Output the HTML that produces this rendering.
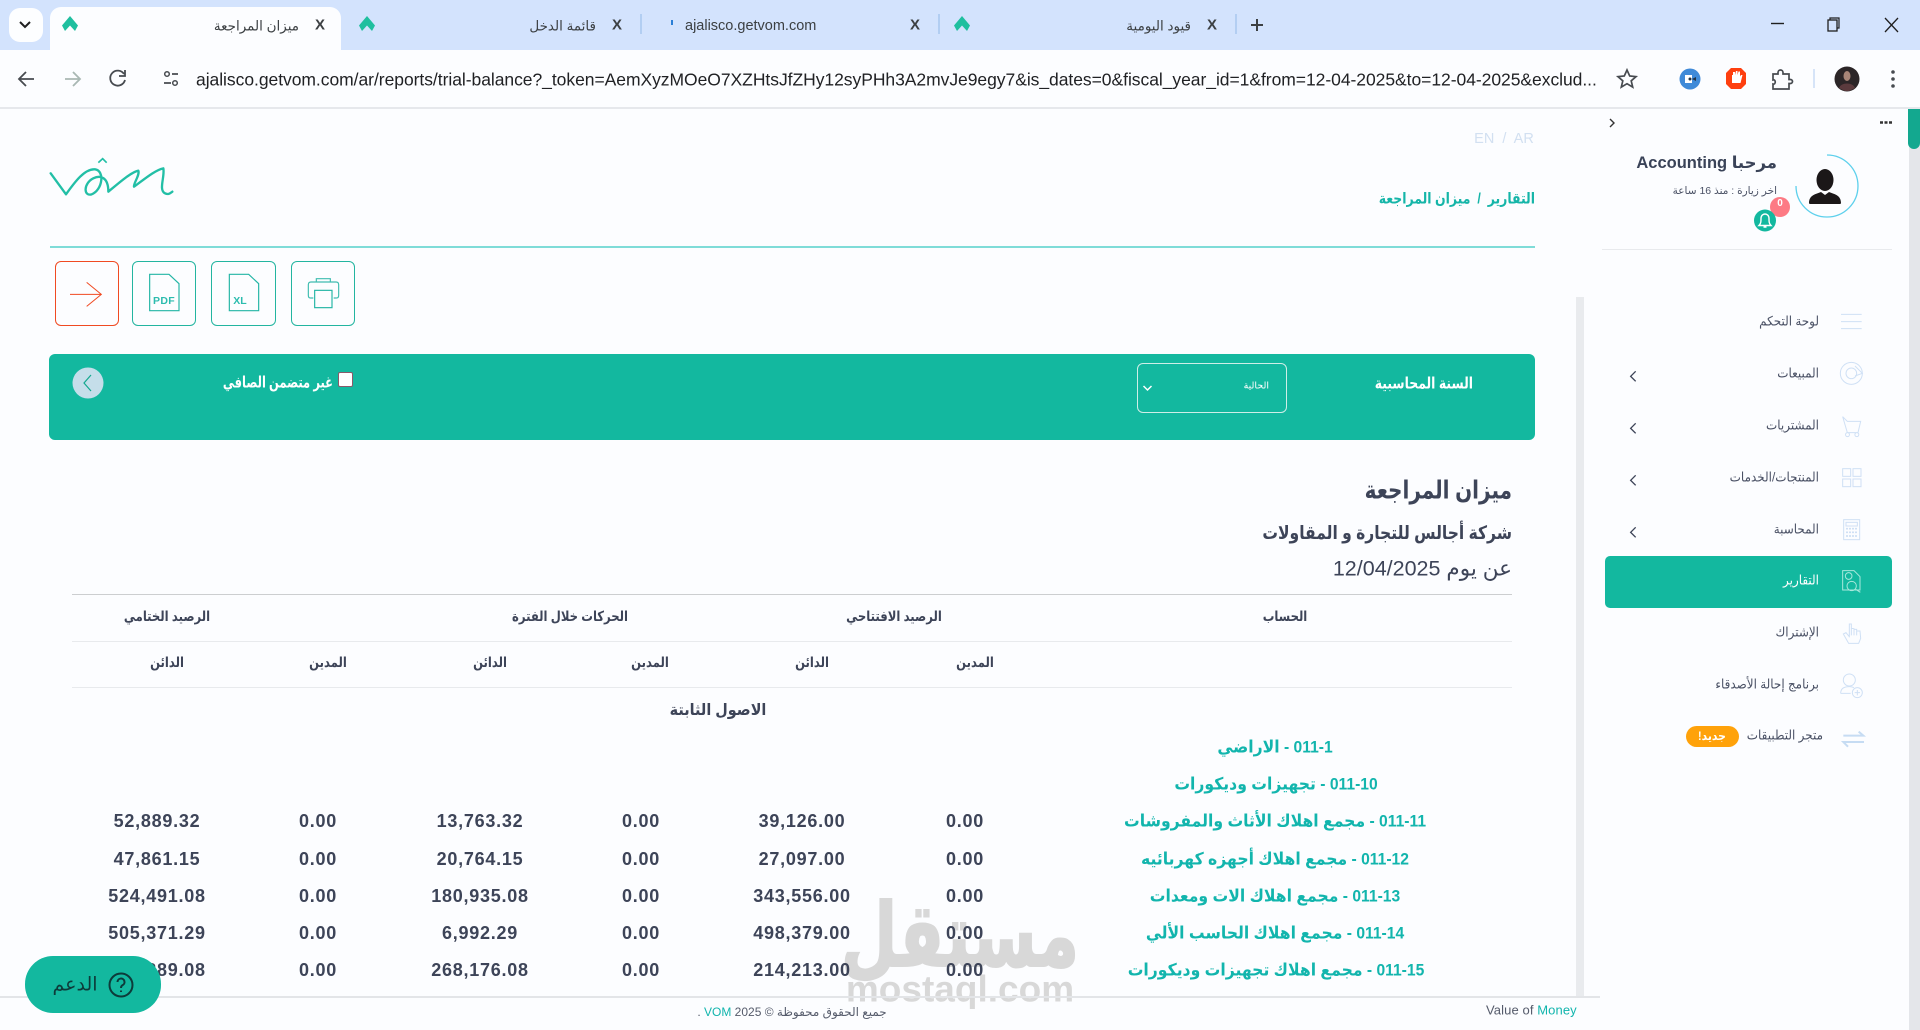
<!DOCTYPE html>
<html lang="ar"><head><meta charset="utf-8"><title>ميزان المراجعة</title>
<style>
html,body{margin:0;padding:0;width:1920px;height:1030px;overflow:hidden;background:#fcfdff}
body{position:relative;font-family:"Liberation Sans","DejaVu Sans",sans-serif;color:#3d4458}
.a{position:absolute}
.c,.r,.l{position:absolute;white-space:nowrap;line-height:1}
.c{transform:translate(-50%,-50%) scaleX(var(--s,1))}
.r{transform:translate(-100%,-50%) scaleX(var(--s,1));transform-origin:100% 50%}
.l{transform:translateY(-50%)}
.ar{direction:rtl}
.h{font-size:14px;font-weight:bold;color:#3d4458;--s:.83}
.n{font-size:18px;font-weight:bold;color:#3d4458;letter-spacing:.75px}
.acc{font-size:17px;font-weight:bold;color:#12b5ad;--s:.92}
.m{font-size:13px;color:#4a5165;--s:.92}
svg{position:absolute;overflow:visible}
.tt{font-size:13.5px;color:#3c4043}
.x{font-size:15px;color:#3c4043;font-weight:bold}
.tbtn{position:absolute;top:261px;height:63px;border:1.3px solid #23b5a0;border-radius:6px;box-sizing:content-box}
</style></head><body>

<div class="a" style="left:0;top:0;width:1920px;height:50px;background:#d3e3fd"></div>
<div class="a" style="left:9px;top:8px;width:34px;height:34px;background:#fdfeff;border-radius:11px"></div>
<svg style="left:0;top:0" width="60" height="50"><path d="M20 22l5 5 5-5" fill="none" stroke="#1f1f1f" stroke-width="2"/></svg>
<div class="a" style="left:50px;top:7px;width:291px;height:43px;background:#fcfdff;border-radius:11px 11px 0 0"></div>
<div class="a" style="left:0;top:50px;width:1920px;height:57px;background:#fcfdff"></div>
<div class="a" style="left:0;top:107px;width:1920px;height:2px;background:#e6e8ec"></div>

<svg style="left:0;top:0" width="1000" height="50">
<defs><path id="v" d="M0 -8L8 1.500 5 7 0 1.500 -5 7 -8 1.500Z" fill="#1fbf9f"/></defs>
<use href="#v" x="70" y="24"/><use href="#v" x="367" y="24"/><use href="#v" x="962" y="24"/>
<path d="M672 20v5" stroke="#2a7fd6" stroke-width="2"/>
<path d="M641 14v20M939 14v20" stroke="#a8c7ef" stroke-width="1.500"/>
</svg>
<svg style="left:0;top:0" width="1920" height="50">
<path d="M1236 14v20" stroke="#a8c7ef" stroke-width="1.500"/>
<path d="M1251 25h12M1257 19v12" stroke="#3c4043" stroke-width="2"/>
<path d="M1771 23.500h13" stroke="#1f1f1f" stroke-width="1.400"/>
<rect x="1828" y="20" width="9" height="11" fill="none" stroke="#1f1f1f" stroke-width="1.300"/><path d="M1830 20v-2h9v10h-2" fill="none" stroke="#1f1f1f" stroke-width="1.200"/>
<path d="M1885 18l13 14M1898 18l-13 14" stroke="#1f1f1f" stroke-width="1.300"/>
</svg>
<div class="r ar tt" style="left:299px;top:26px">ميزان المراجعة</div><div class="c x" style="left:320px;top:25px">X</div>
<div class="r ar tt" style="left:596px;top:26px">قائمة الدخل</div><div class="c x" style="left:617px;top:25px">X</div>
<div class="l tt" style="left:685px;top:26px;font-size:14.500px">ajalisco.getvom.com</div><div class="c x" style="left:915px;top:25px">X</div>
<div class="r ar tt" style="left:1191px;top:26px">قيود اليومية</div><div class="c x" style="left:1212px;top:25px">X</div>

<svg style="left:0;top:50px" width="1920" height="57">
<path d="M34 29H20M26 22l-7 7 7 7" fill="none" stroke="#474b50" stroke-width="1.800"/>
<path d="M65 29h14M73 22l7 7-7 7" fill="none" stroke="#a9b8b3" stroke-width="1.800"/>
<path d="M124 24a7.500 7.500 0 1 0 1 6M125 20v6h-6" fill="none" stroke="#474b50" stroke-width="1.800"/>
<circle cx="167" cy="24" r="2.300" fill="none" stroke="#474b50" stroke-width="1.500"/><path d="M172 24h6M164 33h7" stroke="#474b50" stroke-width="1.800"/><circle cx="175" cy="33" r="2.300" fill="none" stroke="#474b50" stroke-width="1.500"/>
<path d="M1627 20l2.700 6 6.300.6-4.800 4.200 1.500 6.300-5.700-3.400-5.700 3.400 1.500-6.300-4.800-4.200 6.300-.6z" fill="none" stroke="#474b50" stroke-width="1.700"/>
<circle cx="1690" cy="29" r="10.500" fill="#3f8ad8"/><rect x="1685" y="25" width="7" height="8" fill="#fff"/><circle cx="1690" cy="29" r="1.500" fill="#234"/><path d="M1692 29l4-2v4z" fill="#234"/>
<path d="M1731 18h10l5 5v11l-5 5h-10l-5-5V23z" fill="#fe3f0f"/><path d="M1732 33v-8l1 0 0-3 2 0v3l1-4 1.500 0 0 4 1-3.500 1.500 0 0 5 1-1.500 1.500 0-2 8h-6z" fill="#fff"/>
<path d="M1773 24h5v-1.500a2.500 2.500 0 0 1 5 0V24h6v5.500h1.500a2 2 0 0 1 0 4H1789V39h-16v-5c3 1 3-5 0-4z" fill="none" stroke="#474b50" stroke-width="1.700"/>
<path d="M1814 19v19" stroke="#c9dcf6" stroke-width="1.500"/>
<circle cx="1847" cy="29" r="12.500" fill="#2b2527"/><path d="M1839 38c2-6 14-6 16 0l-6 3h-4z" fill="#5a3a3d"/><ellipse cx="1847" cy="26" rx="3.500" ry="5" fill="#a88577"/>
<circle cx="1893" cy="22" r="1.800" fill="#474b50"/><circle cx="1893" cy="29" r="1.800" fill="#474b50"/><circle cx="1893" cy="36" r="1.800" fill="#474b50"/>
</svg>
<div class="l" id="url" style="left:196px;top:80px;font-size:17.500px;color:#202124;letter-spacing:-.045px">ajalisco.getvom.com/ar/reports/trial-balance?_token=AemXyzMOeO7XZHtsJfZHy12syPHh3A2mvJe9egy7&amp;is_dates=0&amp;fiscal_year_id=1&amp;from=12-04-2025&amp;to=12-04-2025&amp;exclud...</div>

<!-- logo -->
<svg style="left:30px;top:140px" width="340" height="200" viewBox="0 0 1020 600">
<path d="M62 100L108 163C135 125 165 85 195 88C225 92 218 150 185 163C160 170 160 130 190 115C210 105 235 110 235 155C265 130 305 95 325 92C330 105 310 130 312 140C340 120 375 90 400 85C405 110 385 150 405 160C415 165 420 160 427 155" fill="none" stroke="#22bfa6" stroke-width="7" stroke-linecap="round" stroke-linejoin="round"/>
<path d="M205 68L218 56 230 68" fill="none" stroke="#22bfa6" stroke-width="5"/>
</svg>
<div class="c" style="left:1504px;top:139px;font-size:14.500px;color:#d2e0f1;white-space:pre">EN  /  AR</div>
<div class="r ar" style="left:1535px;top:199px;font-size:15px;font-weight:bold;color:#15b5a8;white-space:pre;--s:.83">التقارير  /  <span>ميزان المراجعة</span></div>
<div class="a" style="left:50px;top:246px;width:1485px;height:1.500px;background:#7fdcd8"></div>

<div class="tbtn" style="left:55px;width:62px;border-color:#f04a22"></div>
<div class="tbtn" style="left:132px;width:62px"></div>
<div class="tbtn" style="left:211px;width:63px"></div>
<div class="tbtn" style="left:291px;width:62px"></div>
<svg style="left:30px;top:140px" width="340" height="200" viewBox="0 0 1020 600">
<path d="M120 463H214M170 427l44 36-44 36" fill="none" stroke="#f04a22" stroke-width="3"/>
<path d="M359 403h58l30 28v81h-88z" fill="none" stroke="#23b5a5" stroke-width="3.500"/>
<path d="M598 403h58l30 28v81h-88z" fill="none" stroke="#23b5a5" stroke-width="3.500"/>
<path d="M850 474h-8q-7 0-7-8v-32q0-8 8-8h75q8 0 8 8v32q0 8-7 8h-8M859 426v-10h42v10" fill="none" stroke="#3fbdb0" stroke-width="3.500"/>
<rect x="854" y="451" width="52" height="52" fill="none" stroke="#23b5a5" stroke-width="3.500"/>
</svg>
<div class="c" style="left:164px;top:300.500px;font-size:10.500px;font-weight:bold;color:#2cbcae;letter-spacing:.3px">PDF</div>
<div class="c" style="left:240px;top:301px;font-size:10.500px;font-weight:bold;color:#2cbcae">XL</div>

<!-- filter panel -->
<div class="a" style="left:49px;top:354px;width:1486px;height:86px;background:#13b89f;border-radius:6px"></div>
<div class="r ar" style="left:1473px;top:384px;font-size:15.500px;font-weight:bold;color:#fff;--s:.8">السنة المحاسبية</div>
<div class="a" style="left:1137px;top:363px;width:148px;height:48px;border:1px solid #cfeee8;border-radius:6px"></div>
<div class="r ar" style="left:1269px;top:386px;font-size:9.500px;color:#fff">الحالية</div>
<svg style="left:1142px;top:384px" width="12" height="10"><path d="M1.500 2l4 4 4-4" fill="none" stroke="#fff" stroke-width="1.500"/></svg>
<svg style="left:72px;top:367px" width="32" height="32"><circle cx="16" cy="16" r="15.500" fill="#c5deea"/><path d="M19 8l-7 8 7 8" fill="none" stroke="#13a88f" stroke-width="1.200"/></svg>
<div class="a" style="left:338px;top:372px;width:13px;height:13px;background:#fff;border:1px solid #8a5a6a;border-radius:2px"></div>
<div class="r ar" style="left:333px;top:383px;font-size:15.500px;font-weight:bold;color:#fff;--s:.74">غير متضمن الصافي</div>

<!-- footer + watermark sit under the table text -->
<div class="a" style="left:1576px;top:297px;width:8px;height:700px;background:#e9ebee"></div>
<div class="a" style="left:0;top:996px;width:1600px;height:34px;background:#fcfdff"></div>
<div class="c ar" style="left:960px;top:936px;font-size:88px;font-weight:bold;color:#d8d8d8;--s:.74;-webkit-text-stroke:2px #d8d8d8">مستقل</div>
<div class="c" style="left:960px;top:989px;font-size:37px;font-weight:bold;color:#d8d8d8">mostaql.com</div>
<div class="a" style="left:0;top:996px;width:1600px;height:1.500px;background:#e3e5e8"></div>

<!-- report head -->
<div class="r ar" style="left:1512px;top:491px;font-size:25px;font-weight:bold;--s:.8">ميزان المراجعة</div>
<div class="r ar" style="left:1512px;top:533px;font-size:18.500px;font-weight:bold;--s:.84">شركة أجالس للتجارة و المقاولات</div>
<div class="r ar" style="left:1512px;top:569px;font-size:21.500px">عن يوم 12/04/2025</div>

<div class="a" style="left:72px;top:594px;width:1440px;height:1px;background:#ccced0"></div>
<div class="a" style="left:72px;top:641px;width:1440px;height:1px;background:#e8eaed"></div>
<div class="a" style="left:72px;top:687px;width:1440px;height:1px;background:#e8eaed"></div>

<div class="c ar h" style="left:167px;top:616px">الرصيد الختامي</div>
<div class="c ar h" style="left:570px;top:616px">الحركات خلال الفترة</div>
<div class="c ar h" style="left:894px;top:616px">الرصيد الافتتاحي</div>
<div class="c ar h" style="left:1285px;top:616px">الحساب</div>
<div class="c ar h" style="left:167px;top:662px">الدائن</div>
<div class="c ar h" style="left:328px;top:662px">المدين</div>
<div class="c ar h" style="left:490px;top:662px">الدائن</div>
<div class="c ar h" style="left:650px;top:662px">المدين</div>
<div class="c ar h" style="left:812px;top:662px">الدائن</div>
<div class="c ar h" style="left:975px;top:662px">المدين</div>
<div class="c ar" style="left:718px;top:711px;font-size:16px;font-weight:bold;--s:.9">الاصول الثابتة</div>

<div class="c ar acc" style="left:1275px;top:746.500px">011-1 - الاراضي</div>
<div class="c ar acc" style="left:1276px;top:783.500px">011-10 - تجهيزات وديكورات</div>
<div class="c ar acc" style="left:1275px;top:820.500px">011-11 - مجمع اهلاك الأثاث والمفروشات</div>
<div class="c ar acc" style="left:1275px;top:858.500px">011-12 - مجمع اهلاك أجهزه كهربائيه</div>
<div class="c ar acc" style="left:1275px;top:895.500px">011-13 - مجمع اهلاك الات ومعدات</div>
<div class="c ar acc" style="left:1275px;top:932.500px">011-14 - مجمع اهلاك الحاسب الألي</div>
<div class="c ar acc" style="left:1276px;top:969.500px">011-15 - مجمع اهلاك تجهيزات وديكورات</div>

<div class="c n" style="left:157px;top:821px">52,889.32</div><div class="c n" style="left:318px;top:821px">0.00</div><div class="c n" style="left:480px;top:821px">13,763.32</div><div class="c n" style="left:641px;top:821px">0.00</div><div class="c n" style="left:802px;top:821px">39,126.00</div><div class="c n" style="left:965px;top:821px">0.00</div>
<div class="c n" style="left:157px;top:859px">47,861.15</div><div class="c n" style="left:318px;top:859px">0.00</div><div class="c n" style="left:480px;top:859px">20,764.15</div><div class="c n" style="left:641px;top:859px">0.00</div><div class="c n" style="left:802px;top:859px">27,097.00</div><div class="c n" style="left:965px;top:859px">0.00</div>
<div class="c n" style="left:157px;top:896px">524,491.08</div><div class="c n" style="left:318px;top:896px">0.00</div><div class="c n" style="left:480px;top:896px">180,935.08</div><div class="c n" style="left:641px;top:896px">0.00</div><div class="c n" style="left:802px;top:896px">343,556.00</div><div class="c n" style="left:965px;top:896px">0.00</div>
<div class="c n" style="left:157px;top:933px">505,371.29</div><div class="c n" style="left:318px;top:933px">0.00</div><div class="c n" style="left:480px;top:933px">6,992.29</div><div class="c n" style="left:641px;top:933px">0.00</div><div class="c n" style="left:802px;top:933px">498,379.00</div><div class="c n" style="left:965px;top:933px">0.00</div>
<div class="c n" style="left:157px;top:970px">482,389.08</div><div class="c n" style="left:318px;top:970px">0.00</div><div class="c n" style="left:480px;top:970px">268,176.08</div><div class="c n" style="left:641px;top:970px">0.00</div><div class="c n" style="left:802px;top:970px">214,213.00</div><div class="c n" style="left:965px;top:970px">0.00</div>

<div class="c ar" style="left:792px;top:1012px;font-size:12px;color:#555b6b">جميع الحقوق محفوظة © 2025 <span style="color:#12b5ad">VOM</span> .</div>
<div class="l" style="left:1486px;top:1010px;font-size:13px;color:#555b6b;letter-spacing:.1px">Value of <span style="color:#12b5ad">Money</span></div>

<!-- support -->
<div class="a" style="left:25px;top:956px;width:136px;height:57px;background:#13b89f;border-radius:28px"></div>
<svg style="left:108px;top:972px" width="26" height="26"><circle cx="13" cy="13" r="11.500" fill="none" stroke="#0d3b3a" stroke-width="2"/><path d="M9.500 10a3.500 3.500 0 1 1 5 3.200c-1 .6-1.500 1.300-1.500 2.800M13 18.500v1.500" fill="none" stroke="#0d3b3a" stroke-width="2"/></svg>
<div class="c ar" style="left:75px;top:985px;font-size:19px;color:#0d3b3a">الدعم</div>

<!-- sidebar -->
<svg style="left:1600px;top:110px" width="320" height="180">
<path d="M10 9l4 4-4 4" fill="none" stroke="#333" stroke-width="1.400"/>
<path d="M280 12.500h12" stroke="#333" stroke-width="2.500" stroke-dasharray="3 1.500"/>
<path d="M227 45A31 31 0 0 1 227 107 31 31 0 0 1 196 76" fill="none" stroke="#5dd0ec" stroke-width="1.300"/>
<ellipse cx="225" cy="70" rx="8.500" ry="11" fill="#1b1718"/><path d="M209 93c0-8 7-9 12-11l4 3 4-3c5 2 12 3 12 11 0 1-1 1-2 1h-28c-1 0-2 0-2-1z" fill="#1b1718"/>
<circle cx="180" cy="97" r="10" fill="#fd7a84"/>
<circle cx="165" cy="110.500" r="11" fill="#13b89f"/>
<path d="M159 115.500c2-2 2-4 2-7 0-3 2-4.500 4-4.500s4 1.500 4 4.500c0 3 0 5 2 7zM163.500 117h3" fill="none" stroke="#fff" stroke-width="1.400"/>
</svg>
<div class="c" style="left:1780px;top:204px;font-size:10px;font-weight:bold;color:#fff">0</div>
<div class="r ar" style="left:1777px;top:163px;font-size:16.500px;font-weight:bold;color:#3a4358">مرحبا Accounting</div>
<div class="r ar" style="left:1777px;top:191px;font-size:10.500px;color:#4a5165">اخر زيارة : منذ 16 ساعة</div>
<div class="a" style="left:1602px;top:249px;width:290px;height:1px;background:#e8eaed"></div>

<div class="a" style="left:1605px;top:556px;width:287px;height:52px;background:#13b89f;border-radius:5px"></div>
<div class="r ar m" style="left:1819px;top:321px">لوحة التحكم</div>
<div class="r ar m" style="left:1819px;top:373px">المبيعات</div>
<div class="r ar m" style="left:1819px;top:425px">المشتريات</div>
<div class="r ar m" style="left:1819px;top:477px">المنتجات/الخدمات</div>
<div class="r ar m" style="left:1819px;top:529px">المحاسبة</div>
<div class="r ar m" style="left:1819px;top:580px;color:#fff">التقارير</div>
<div class="r ar m" style="left:1819px;top:632px">الإشتراك</div>
<div class="r ar m" style="left:1819px;top:684px">برنامج إحالة الأصدقاء</div>
<div class="r ar m" style="left:1823px;top:735px">متجر التطبيقات</div>
<div class="a" style="left:1686px;top:726px;width:53px;height:21px;background:#ffa20a;border-radius:11px"></div>
<div class="c ar" style="left:1712px;top:736px;font-size:12px;font-weight:bold;color:#fff;--s:.9">جديد!</div>

<svg style="left:1560px;top:280px" width="360" height="480" viewBox="0 0 1080 1440" fill="none" stroke="#cfe0f5" stroke-width="3">
<path d="M843 103h62M843 125h62" /><path d="M843 146h62"/>
<circle cx="874" cy="280" r="33"/><circle cx="874" cy="280" r="16"/><path d="M885 258l22 22-22 8"/>
<path d="M848 410l14 14h40l-8 34h-32zM862 458a6 6 0 1 0 1 0M890 458a6 6 0 1 0 1 0"/>
<rect x="848" y="566" width="24" height="23"/><rect x="879" y="566" width="24" height="23"/><rect x="848" y="597" width="24" height="23"/><rect x="879" y="597" width="24" height="23"/>
<rect x="851" y="719" width="48" height="60"/><rect x="858" y="727" width="34" height="11"/><path d="M858 746h34M858 757h34M858 768h34" stroke-width="5" stroke-dasharray="6 3"/>
<path d="M848 872h34l18 18v40h-52z" stroke="#a8e8dc"/><circle cx="866" cy="888" r="10" stroke="#a8e8dc"/><circle cx="875" cy="918" r="14" stroke="#a8e8dc"/><path d="M887 928l14 9" stroke="#a8e8dc"/>
<path d="M868 1072v-40h6v34M874 1045l8 1v20M882 1048h8v18M890 1053h10l2 22-6 15h-30l-16-28 8-4 10 12"/>
<circle cx="868" cy="1200" r="18"/><path d="M842 1240c0-14 10-20 26-20 6 0 10 1 14 3M842 1240h30"/><circle cx="892" cy="1238" r="15"/><path d="M884 1238h16M892 1230v16"/>
<path d="M850 1367h60l-14-12M912 1386h-62l14 14" stroke-width="6" stroke="#c6dcf3"/>
<g stroke="#3d4458" stroke-width="4"><path d="M227 274l-15 15 15 15M227 430l-15 15 15 15M227 586l-15 15 15 15M227 742l-15 15 15 15"/></g>
</svg>

<!-- main scrollbar -->
<div class="a" style="left:1909px;top:109px;width:11px;height:921px;background:#e4e6ea"></div>
<div class="a" style="left:1908px;top:109px;width:12px;height:40px;background:#13a88f;border-radius:0 0 6px 6px"></div>
</body></html>
